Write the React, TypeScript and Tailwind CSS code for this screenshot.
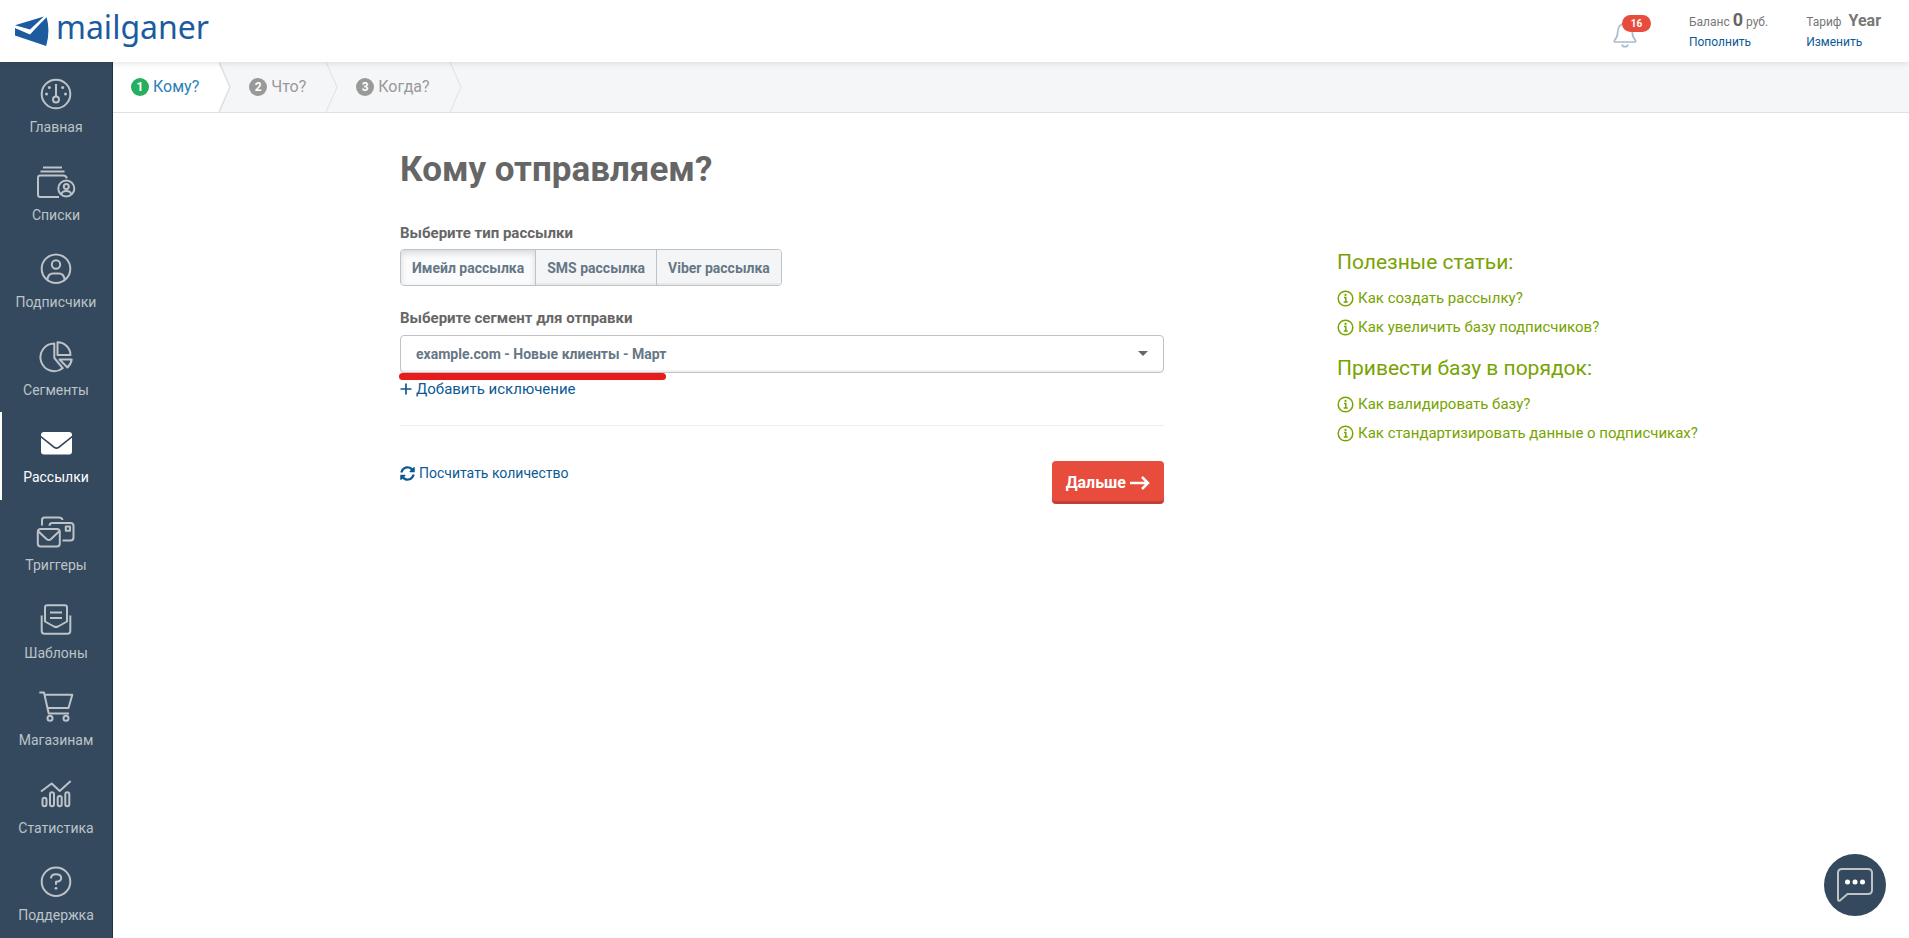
import React, { useState } from "react";
import { clsx } from "clsx";

interface NavItem {
    label: string;
    icon: React.ReactNode;
}

interface Article {
    title: string;
    links: string[];
}

const NAV_ITEMS: NavItem[] = [
    {
        label: "Главная",
        icon: (
            <>
                <circle cx="20" cy="16" r="14.3" />
                <circle cx="20" cy="21.5" r="3" />
                <path d="M20 6v12.5" />
                <g fill="currentColor" stroke="none">
                    <circle cx="13.3" cy="9.5" r="1.5" />
                    <circle cx="26.7" cy="9.5" r="1.5" />
                    <circle cx="10.5" cy="16" r="1.5" />
                    <circle cx="29.5" cy="16" r="1.5" />
                </g>
            </>
        ),
    },
    {
        label: "Списки",
        icon: (
            <>
                <path d="M7 1.6h19M4.5 5.6h24M23 31H4.3q-2.3 0-2.3-2.3V11.8q0-2.3 2.3-2.3h23q3 0 3.4 2.8" />
                <circle cx="30.3" cy="22.5" r="8" />
                <circle cx="30.3" cy="20.5" r="2.5" />
                <path d="M25.5 28q.8-3 4.8-3t4.8 3" />
            </>
        ),
    },
    {
        label: "Подписчики",
        icon: (
            <>
                <circle cx="20" cy="15.7" r="14.3" />
                <circle cx="20" cy="11.5" r="4.2" />
                <path d="M11.3 27Q12 20.5 17 20.5h6q5 0 5.7 6.5" />
            </>
        ),
    },
    {
        label: "Сегменты",
        icon: (
            <>
                <path d="M18.3 2.5V17l8.4 10.2A13.8 13.8 0 1 1 18.3 2.5z" />
                <path d="M21.5 1.3v12.8h13A13 13 0 0 0 21.5 1.3zM23.5 18.5h12.2q-.7 4.7-4.2 8z" />
            </>
        ),
    },
    {
        label: "Рассылки",
        icon: (
            <g fill="currentColor" stroke="none">
                <path d="M8 4h25q3 0 3 3v.7L22.5 18.5q-2 1.5-4 0L5 7.700V7q0-3 3-3z" />
                <path d="M5 9.800v13.700q0 3 3 3h25q3 0 3-3V9.800L23.300 20q-2.800 2-5.600 0z" />
            </g>
        ),
    },
    {
        label: "Триггеры",
        icon: (
            <>
                <path d="M6 9.500V4q0-2.500 2.500-2.500h14.500q2.800 0 3.600 2.500" />
                <path d="M13.500 9.800q0-2.800 2.800-2.800h18.200q3 0 3 3v11.500q0 3-3 3H26.500" />
                <path d="M29.800 10.500h4.200v4.200h-4.200z" />
                <rect x="1.800" y="13" width="22" height="17.500" rx="3" />
                <path d="M2.500 15.500l8.300 7.700q2 1.700 4 0l8.300-7.700" />
            </>
        ),
    },
    {
        label: "Шаблоны",
        icon: (
            <>
                <path d="M9 17.500V3.500Q9 1.200 11.300 1.200h17.400Q31 1.200 31 3.500v14l-9 5q-2 1-4 0z" />
                <path d="M14 8.500h12M14 14h12" />
                <path d="M5.700 11.500v15.500q0 2.700 2.700 2.700h23.200q2.700 0 2.700-2.700V11.500" />
            </>
        ),
    },
    {
        label: "Магазинам",
        icon: (
            <>
                <path d="M3.300 1.500H8l4.700 21H33" />
                <path d="M8.700 3.700h27.600L32.500 17H11.600" />
                <circle cx="14" cy="27.300" r="2.500" />
                <circle cx="30" cy="27.300" r="2.500" />
            </>
        ),
    },
    {
        label: "Статистика",
        icon: (
            <>
                <path d="M5 12.500l10.700-8 8 7.500 11-10" />
                <rect x="6.500" y="18.700" width="4" height="8.600" rx="2" />
                <rect x="14" y="13.200" width="4" height="14.100" rx="2" />
                <rect x="21.700" y="17" width="4" height="10.300" rx="2" />
                <rect x="29.300" y="13.200" width="4" height="14.100" rx="2" />
            </>
        ),
    },
    {
        label: "Поддержка",
        icon: (
            <>
                <circle cx="20" cy="15.700" r="14.300" />
                <path d="M15 12.500q0-4.200 5-4.200 5.200 0 5.200 3.800 0 3.700-5.200 3.700v3" strokeWidth="2" />
                <circle cx="20" cy="22.300" r="1.400" fill="currentColor" stroke="none" />
            </>
        ),
    },
];

const STEPS = ["Кому?", "Что?", "Когда?"];

const MAILING_TYPES = ["Имейл рассылка", "SMS рассылка", "Viber рассылка"];

const ARTICLES: Article[] = [
    {
        title: "Полезные статьи:",
        links: ["Как создать рассылку?", "Как увеличить базу подписчиков?"],
    },
    {
        title: "Привести базу в порядок:",
        links: ["Как валидировать базу?", "Как стандартизировать данные о подписчиках?"],
    },
];

const Header = () => (
    <header className="relative z-10 flex h-[62px] items-center justify-between bg-white pl-[15px] pr-7 shadow-[0_1px_6px_rgba(0,0,0,0.12)]">
        <a href="#" className="flex items-center gap-[7px] text-[#1b5b9e]">
            <svg width="34" height="32" viewBox="0 0 34 32" fill="currentColor">
                <path d="M0 10.200L29 1.500 15 14.500z" />
                <path d="M0 13l15 6.500L31.500 1.500q4 15-.3 29.500L0 20.500z" />
                <path d="M0 11.700L14.500 17.500 31.500 1" fill="none" stroke="#fff" strokeWidth="2" />
            </svg>
            <span className="mb-2 font-['Noto_Sans',sans-serif] text-[32px] leading-9">mailganer</span>
        </a>
        <div className="flex items-center text-xs leading-5 text-[#777]">
            <button type="button" aria-label="Уведомления" className="relative mr-[52px] mt-2 h-8 w-6 text-[#a9bccd]">
                <svg width="24" height="28" viewBox="0 0 24 28" fill="none" stroke="currentColor" strokeWidth="1.700">
                    <path d="M12 2.500q-7 .5-7.300 8.500 0 5-3 8-1.200 2 1 2h18.600q2.200 0 1-2-3-3-3-8Q19 3 12 2.500z" />
                    <path d="M9 23.500q.5 2.200 3 2.200t3-2.200" />
                </svg>
                <span className="absolute -top-1 left-[9px] h-[17px] w-[29px] rounded-full bg-[#e74c3c] text-center text-[10px] font-bold leading-[17px] text-white">
                    16
                </span>
            </button>
            <div className="mr-[38px]">
                <div>
                    Баланс <b className="text-lg leading-5 text-[#666]">0</b> руб.
                </div>
                <a href="#" className="block text-[#0b5a94]">Пополнить</a>
            </div>
            <div>
                <div>
                    Тариф <b className="ml-1 text-base leading-5">Year</b>
                </div>
                <a href="#" className="block text-[#0b5a94]">Изменить</a>
            </div>
        </div>
    </header>
);

const Sidebar = () => (
    <nav className="flex w-[113px] shrink-0 flex-col border-r border-[#22313f] bg-[#34495e]">
        {NAV_ITEMS.map((item) => {
            const active = item.label === "Рассылки";
            return (
                <a
                    key={item.label}
                    href="#"
                    className={clsx(
                        "flex flex-1 flex-col items-center border-l-2 pr-[2px] pt-4 text-sm",
                        active ? "border-white text-white" : "border-transparent text-[#bdc3c7]"
                    )}
                >
                    <svg
                        width="40"
                        height="32"
                        viewBox="0 0 40 32"
                        fill="none"
                        stroke="currentColor"
                        strokeWidth="2"
                        strokeLinejoin="round"
                    >
                        {item.icon}
                    </svg>
                    <span className="mt-[5px] leading-6">{item.label}</span>
                </a>
            );
        })}
    </nav>
);

const Steps = () => (
    <ol className="flex h-[51px] border-b border-[#dde1e6] bg-[#f5f6f8]">
        {STEPS.map((step, index) => {
            const active = index === 0;
            return (
                <li key={step} className="flex items-center">
                    <a
                        href="#"
                        className={clsx(
                            "flex h-full items-center gap-1 pl-[18px] pr-5 text-base",
                            active ? "bg-white text-[#2980b9]" : "text-[#999]"
                        )}
                    >
                        <span
                            className={clsx(
                                "flex size-[18px] items-center justify-center rounded-full text-xs font-bold text-white",
                                active ? "bg-[#27ae60]" : "bg-[#999]"
                            )}
                        >
                            {index + 1}
                        </span>
                        {step}
                    </a>
                    <svg width="12" height="50" viewBox="0 0 12 50" fill={active ? "#fff" : "none"}>
                        <path d="M0 0L11 25 0 50" stroke="#dde1e6" strokeWidth={active ? 1.6 : 1} />
                    </svg>
                </li>
            );
        })}
    </ol>
);

const InfoIcon = () => (
    <svg width="17" height="17" viewBox="0 0 17 17" fill="none" stroke="currentColor" strokeWidth="1.500">
        <circle cx="8.500" cy="8.500" r="7.300" />
        <path d="M7 7.500h1.800v4.300M6.700 12h4" />
        <circle cx="8.500" cy="4.900" r="1.100" fill="currentColor" stroke="none" />
    </svg>
);

const MailingForm = () => {
    const [type, setType] = useState(MAILING_TYPES[0]);

    return (
        <form className="text-[15px]" onSubmit={(e) => e.preventDefault()}>
            <h1 className="text-[35px] font-bold leading-[48px] text-[#666]">Кому отправляем?</h1>

            <div id="type-label" className="mt-[29px] font-bold leading-5 text-[#666]">
                Выберите тип рассылки
            </div>
            <div
                role="group"
                aria-labelledby="type-label"
                className="mt-[6px] flex h-[37px] w-fit divide-x divide-[#bdc3c7] overflow-hidden rounded border border-[#bdc3c7]"
            >
                {MAILING_TYPES.map((item) => (
                    <button
                        key={item}
                        type="button"
                        aria-pressed={item === type}
                        onClick={() => setType(item)}
                        className={clsx(
                            "px-[11px] text-sm font-bold text-[#667786]",
                            item === type
                                ? "bg-[#f9fbfd] shadow-[inset_0_3px_6px_rgba(0,0,0,0.14)]"
                                : "bg-[#f4f5f7] shadow-[inset_0_-2px_0_rgba(0,0,0,0.05)]"
                        )}
                    >
                        {item}
                    </button>
                ))}
            </div>

            <label htmlFor="segment" className="mt-[22px] block font-bold leading-5 text-[#666]">
                Выберите сегмент для отправки
            </label>
            <div className="relative mt-[7px]">
                <select
                    id="segment"
                    className="block h-[38px] w-full appearance-none rounded border border-[#bdc3c7] bg-white pl-[15px] pr-10 text-sm font-bold text-[#667786] shadow-[inset_0_-2px_0_rgba(0,0,0,0.05)]"
                >
                    <option>example.com - Новые клиенты - Март</option>
                </select>
                <svg className="pointer-events-none absolute right-4 top-4" width="10" height="5" viewBox="0 0 10 5">
                    <path d="M0 0h10L5 5z" fill="#666" />
                </svg>
                {/* marker stroke under the chosen segment */}
                <div className="absolute -left-px top-[38px] h-[7px] w-[267px] rounded-full bg-[#e81c1c]" />
            </div>
            <a href="#" className="mt-1 flex w-fit items-center gap-1 leading-6 text-[#0b5a94]">
                <svg width="12" height="12" viewBox="0 0 12 12" stroke="currentColor" strokeWidth="1.700">
                    <path d="M6 .5v11M.5 6h11" />
                </svg>
                Добавить исключение
            </a>

            <hr className="mt-6 border-[#eee]" />

            <div className="mt-[35px] flex items-start justify-between">
                <button type="button" className="flex items-center gap-1 text-sm leading-6 text-[#0b5a94]">
                    <svg width="15" height="15" viewBox="0 0 512 512" fill="currentColor">
                        <path d="M370.700 133.300C339.500 104 298.900 88 255.800 88c-77.500.1-144.300 53.200-162.800 126.900-1.300 5.400-6.100 9.100-11.700 9.100H24.100c-7.500 0-13.200-6.800-11.800-14.200C33.900 94.900 134.800 8 256 8c66.400 0 126.800 26.100 171.300 68.700L463 41c15.100-15.100 41-4.400 41 17v134c0 13.300-10.700 24-24 24H346c-21.400 0-32.100-25.900-17-41l41.700-41.700zM32 296h134c21.400 0 32.100 25.900 17 41l-41.800 41.800c31.300 29.300 71.800 45.300 114.900 45.200 77.400-.1 144.300-53.100 162.800-126.800 1.300-5.400 6.100-9.100 11.700-9.100h57.300c7.500 0 13.200 6.800 11.800 14.200C478.100 417.100 377.200 504 256 504c-66.400 0-126.800-26.100-171.300-68.700L49 471c-15.100 15.100-41 4.400-41-17V320c0-13.300 10.700-24 24-24z" />
                    </svg>
                    Посчитать количество
                </button>
                <button
                    type="submit"
                    className="flex h-[43px] items-center gap-1 rounded bg-[#e74c3c] px-3.5 text-base font-bold text-white shadow-[inset_0_-3px_0_rgba(0,0,0,0.15)]"
                >
                    Дальше
                    <svg width="20" height="14" viewBox="0 0 20 14" fill="none" stroke="currentColor" strokeWidth="2.500">
                        <path d="M0 7h18M12 1l6 6-6 6" />
                    </svg>
                </button>
            </div>
        </form>
    );
};

const Articles = () => (
    <aside className="pt-[100px] text-[#78a300]">
        {ARTICLES.map((group) => (
            <section key={group.title} className="mb-[10px]">
                <h2 className="text-[21px] leading-8">{group.title}</h2>
                <ul className="mt-[6px]">
                    {group.links.map((link) => (
                        <li key={link} className="h-[29px]">
                            <a href="#" className="inline-flex items-center gap-1 whitespace-nowrap text-[15px] leading-[29px]">
                                <InfoIcon />
                                {link}
                            </a>
                        </li>
                    ))}
                </ul>
            </section>
        ))}
    </aside>
);

export default function App() {
    return (
        <div className="flex min-h-screen flex-col bg-white font-['Roboto','Noto_Sans',sans-serif]">
            <Header />
            <div className="flex flex-1">
                <Sidebar />
                <main className="min-w-0 flex-1">
                    <Steps />
                    <div className="grid grid-cols-[287fr_764fr_173fr_572fr] pt-[33px]">
                        <div className="col-start-2">
                            <MailingForm />
                        </div>
                        <div className="col-start-4">
                            <Articles />
                        </div>
                    </div>
                </main>
            </div>
            <button
                type="button"
                aria-label="Чат"
                className="fixed bottom-[22px] right-[23px] flex size-[62px] items-center justify-center rounded-full bg-[#34495e]"
            >
                <svg width="36" height="34" viewBox="0 0 36 34" fill="none" stroke="#bdc3c7" strokeWidth="2">
                    <path d="M5 1h26q4 0 4 4v17q0 4-4 4H10.500l-7.500 6.500q-2 1-2-1.500V5q0-4 4-4z" />
                    <g fill="#fff" stroke="none">
                        <circle cx="10.500" cy="14" r="2.500" />
                        <circle cx="18" cy="14" r="2.500" />
                        <circle cx="25.500" cy="14" r="2.500" />
                    </g>
                </svg>
            </button>
        </div>
    );
}
